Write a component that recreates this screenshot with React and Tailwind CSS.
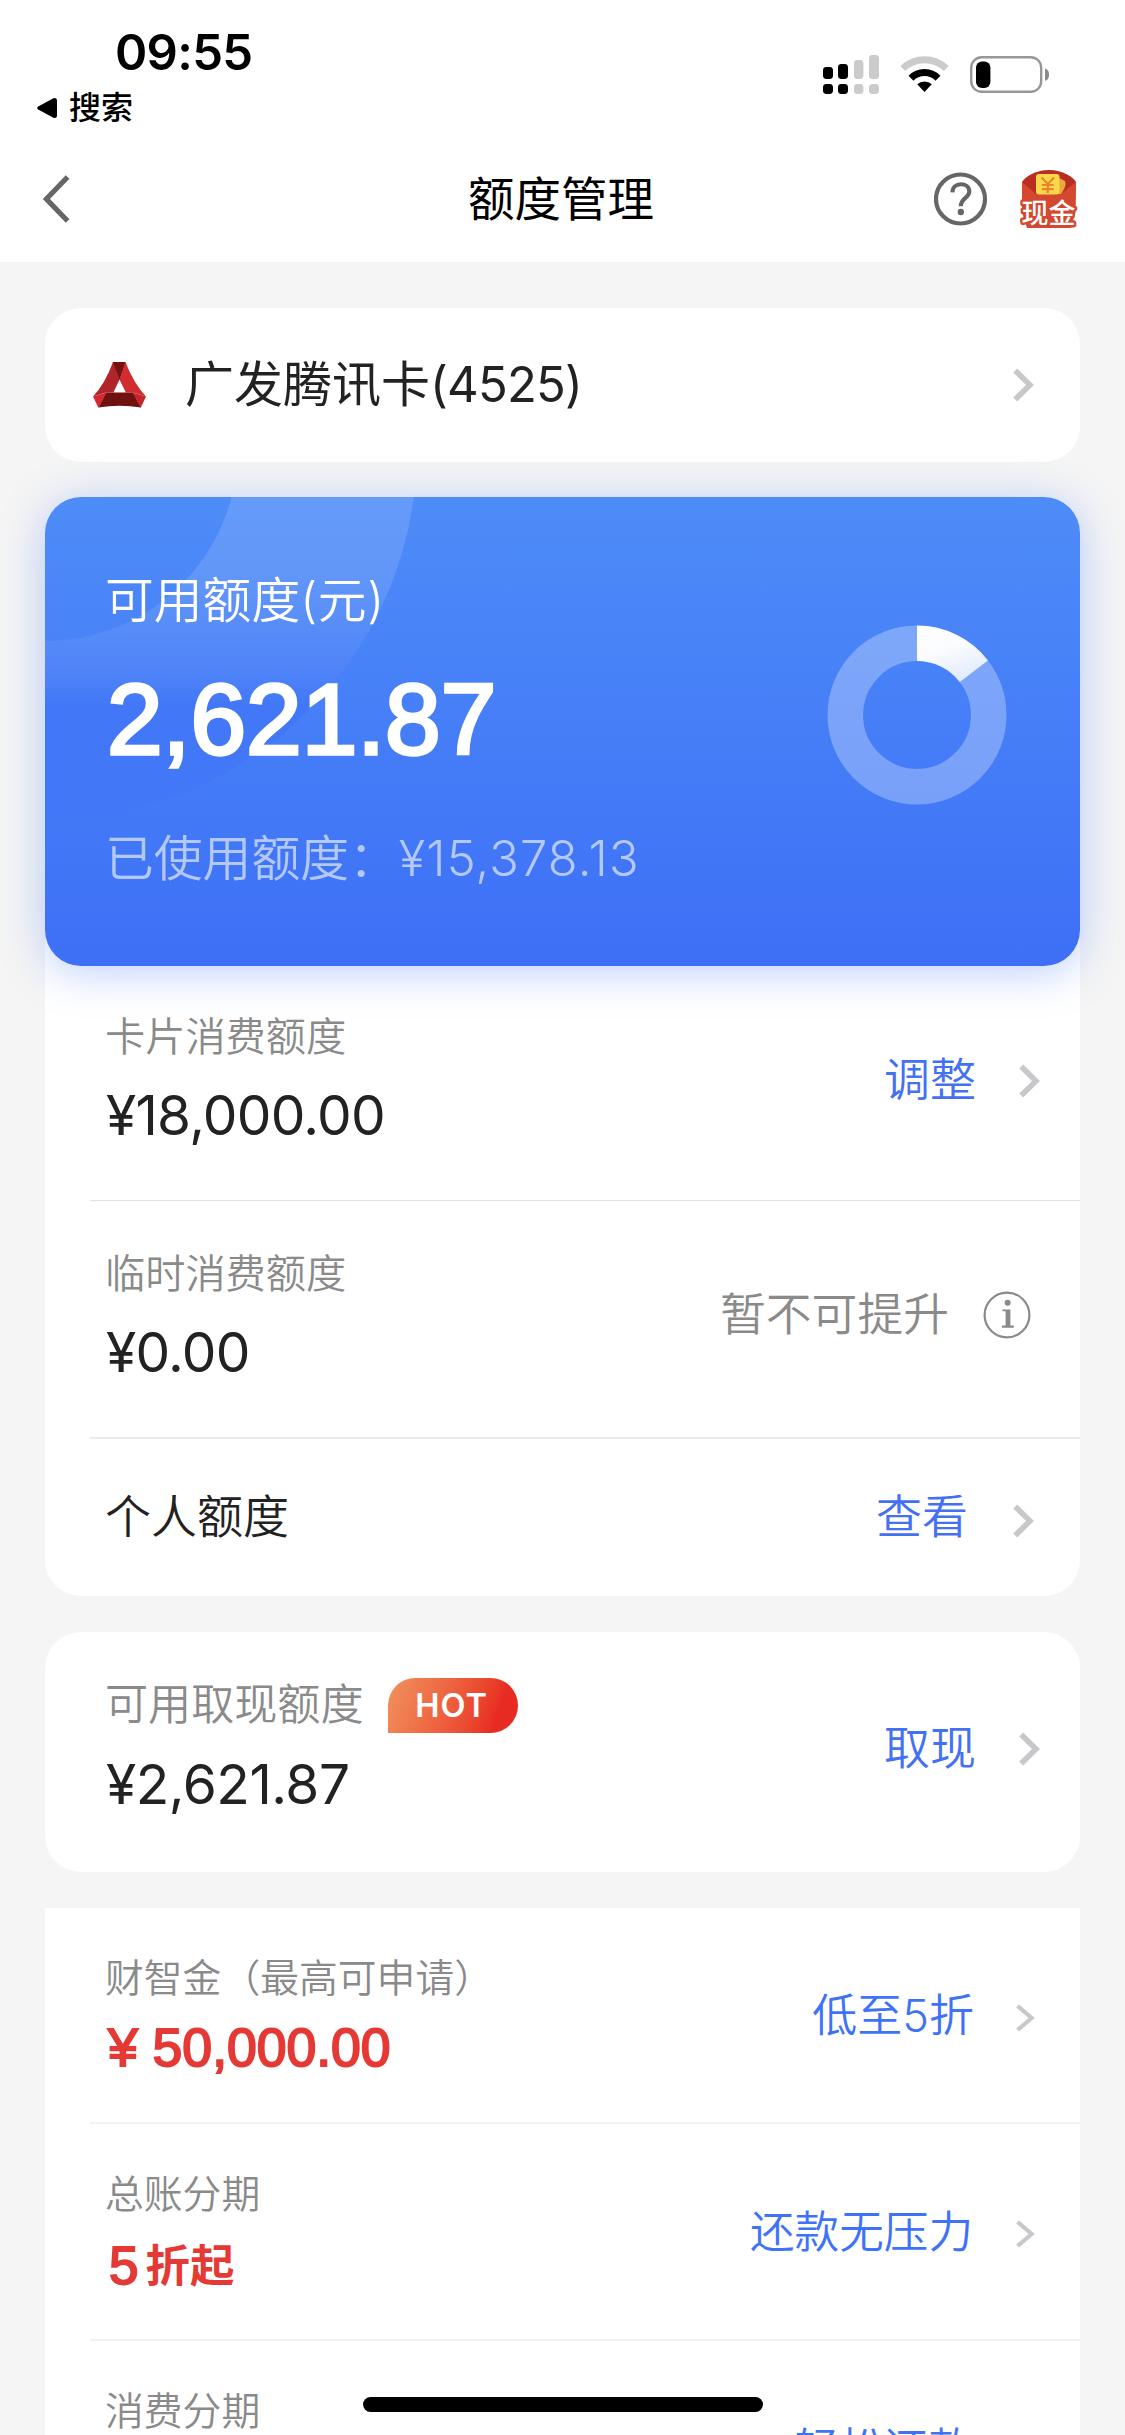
import React from "react";

function Chevron({ small = false, className = "" }) {
  return small ? (
    <svg className={"h-[28px] w-[19px] shrink-0 " + className} viewBox="0 0 19 28" fill="none">
      <path d="M1.6 2 L15.6 14 L1.6 26" stroke="#c7c7cc" strokeWidth="4.2" />
    </svg>
  ) : (
    <svg className={"h-[34px] w-[21px] shrink-0 " + className} viewBox="0 0 21 34" fill="none">
      <path d="M2.2 2.6 L17 17 L2.2 31.4" stroke="#c7c7cc" strokeWidth="5.6" />
    </svg>
  );
}

function StatusIcons() {
  return (
    <svg className="h-[44px] w-[226px]" viewBox="823 52 226 44" fill="none">
      <g fill="#000">
        <rect x="823" y="67" width="10" height="12" rx="3.4" />
        <rect x="838" y="64" width="10" height="15" rx="3.4" />
        <rect x="823" y="84" width="10" height="10" rx="3.4" />
        <rect x="838" y="84" width="10" height="10" rx="3.4" />
      </g>
      <g fill="#cbcbcb">
        <rect x="854" y="60" width="9.4" height="19" rx="3.4" />
        <rect x="869" y="55" width="10" height="24" rx="3.4" />
        <rect x="854" y="84" width="9.4" height="10" rx="3.4" />
        <rect x="869" y="84" width="10" height="10" rx="3.4" />
      </g>
      <path d="M902.8 68.6 A31.3 31.3 0 0 1 946.2 68.6" stroke="#cbcbcb" strokeWidth="7" />
      <path d="M911 78.2 A19 19 0 0 1 938 78.2" stroke="#000" strokeWidth="7" />
      <path d="M917.2 84.2 A11 11 0 0 1 931.8 84.2 L924.5 92 Z" fill="#000" />
      <rect x="971.2" y="57.2" width="70" height="34.6" rx="10.5" stroke="#979797" strokeWidth="2.4" />
      <rect x="976" y="61.5" width="14.4" height="26.5" rx="6" fill="#000" />
      <path d="M1045 68.6 C1048.2 69.6 1049 72 1049 74.7 C1049 77.4 1048.2 79.8 1045 80.8 Z" fill="#8a8a8a" />
    </svg>
  );
}

function HelpIcon() {
  return (
    <svg className="h-[54px] w-[54px]" viewBox="0 0 54 54" fill="none">
      <circle cx="26.5" cy="27" r="24.5" stroke="#666" strokeWidth="4.2" />
      <path d="M18.4 20.4 C18.6 14.8 22.4 12.2 26.8 12.2 C31.6 12.2 35.3 15 35.3 19.5 C35.3 25.8 26.8 26.2 26.8 34.2" stroke="#666" strokeWidth="4.1" />
      <circle cx="26.8" cy="40" r="3.2" fill="#666" />
    </svg>
  );
}

function RedPacket() {
  return (
    <svg className="h-[60px] w-[58px] font-['Noto_Sans_CJK_SC',sans-serif]" viewBox="1019 169 58 60">
      <path d="M1021 182 C1024 177 1034 170 1048 170 C1062 170 1072 177 1075 182 L1074 212 L1022 212 Z" fill="#b92e22" />
      <path d="M1021 182 L1035 194 H1060 L1075 182 L1074.5 212 L1070 228 H1026 L1021 212 Z" fill="#d4482f" />
      <path d="M1056 177 L1064 181 Q1066 186 1060 194 H1054 Z" fill="#e9a83a" />
      <rect x="1035" y="174" width="23.5" height="20.5" rx="3" fill="#f8d84a" />
      <path d="M1040.5 177.5 L1046.8 184 L1053 177.5 M1046.8 184 V193 M1041 185 H1052.6 M1041 189.2 H1052.6" stroke="#e8862e" strokeWidth="2.2" fill="none" />
      <text x="1020.4" y="222.5" fontSize="27" fontWeight="500" fill="#fff" stroke="#d4482f" strokeWidth="5" strokeLinejoin="round" paintOrder="stroke">现金</text>
    </svg>
  );
}

function BankLogo() {
  return (
    <svg className="h-[46px] w-[53px] shrink-0" viewBox="0 0 53 46">
      <path d="M20 0 L26.5 17.5 L20.4 30.4 L13 30.6 L0 34.4 Q12 22 20 0 Z" fill="#b1242a" />
      <path d="M32.4 0 Q41 22 53 34.4 L40 30.6 L32.8 30.4 L26.5 17.5 Z" fill="#d22b30" />
      <path d="M19.6 0 H32.6 L26.5 18 Z" fill="#78100f" />
      <path d="M13 30.4 H40 L48 45.6 Q26.5 42 5.5 45.6 Z" fill="#701110" />
      <path d="M0 34.4 L13.4 30.4 L5.5 46 Z" fill="#d6292f" />
      <path d="M53 34.4 L39.6 30.4 L47.6 46 Z" fill="#c3262c" />
    </svg>
  );
}

function InfoIcon() {
  return (
    <svg className="h-[48px] w-[48px] shrink-0" viewBox="0 0 48 48" fill="none">
      <circle cx="24" cy="24" r="22.4" stroke="#8a8a8a" strokeWidth="2.2" />
      <circle cx="24.6" cy="11.8" r="3" fill="#8a8a8a" />
      <path d="M19.4 18.4 H27.4 V34.6 H30.8 V36.8 H19 V34.6 H22.6 V20.2 H19.4 Z" fill="#8a8a8a" />
    </svg>
  );
}

function Donut() {
  return (
    <svg className="h-[180px] w-[180px] shrink-0" viewBox="-90 -90 180 180" fill="none">
      <defs>
        <linearGradient id="slice" gradientUnits="userSpaceOnUse" x1="10" y1="-90" x2="30" y2="-30">
          <stop offset="0" stopColor="#fff" />
          <stop offset="0.45" stopColor="#fafcff" />
          <stop offset="1" stopColor="#e2ebfd" />
        </linearGradient>
      </defs>
      <circle r="71.7" stroke="#fff" strokeOpacity="0.29" strokeWidth="35.6" />
      <path d="M0 -89.5 A89.5 89.5 0 0 1 70.9 -54.6 L42.8 -33 A54 54 0 0 0 0 -54 Z" fill="url(#slice)" />
    </svg>
  );
}

function CardRings() {
  return (
    <svg className="absolute inset-0 h-full w-full" viewBox="0 0 1035 469" fill="none">
      <defs>
        <linearGradient id="band" gradientUnits="userSpaceOnUse" x1="0" y1="0" x2="0" y2="324">
          <stop offset="0" stopColor="#fff" stopOpacity="0.13" />
          <stop offset="0.2" stopColor="#fff" stopOpacity="0.13" />
          <stop offset="0.45" stopColor="#80a0ff" stopOpacity="0.19" />
          <stop offset="0.64" stopColor="#3c6cf6" stopOpacity="0.45" />
          <stop offset="1" stopColor="#3c6cf6" stopOpacity="0.1" />
        </linearGradient>
      </defs>
      <circle cx="0" cy="-49" r="282.5" stroke="url(#band)" strokeWidth="179" />
    </svg>
  );
}

export default function App() {
  return (
    <div className="relative h-[2435px] w-[1125px] overflow-hidden bg-[#f5f5f5] font-['Inter','Noto_Sans_CJK_SC',sans-serif] font-[350] text-[#222]">
      <header className="h-[262px] bg-white text-black">
        <div className="flex h-[136px] justify-between pr-[76px]">
          <div className="pt-[23px]">
            <div className="pl-[115px] text-[49px] leading-[60px] font-semibold tracking-[-0.7px]">09:55</div>
            <div className="flex items-center gap-[12px] pl-[37px] text-[32px] leading-[50px] font-medium">
              <svg className="h-[22px] w-[20px]" viewBox="0 0 20 22">
                <path d="M1.2 9.4 L16.4 1.2 Q20 0 20 3.4 V18.6 Q20 22 16.4 20.8 L1.2 12.6 Q-0.8 11 1.2 9.4 Z" />
              </svg>
              <span>搜索</span>
            </div>
          </div>
          <div className="pt-[52px]">
            <StatusIcons />
          </div>
        </div>
        <nav className="grid h-[126px] grid-cols-3 items-center pr-[47px] pl-[44px]">
          <svg className="-ml-[2px] h-[50px] w-[28px]" viewBox="0 0 28 50" fill="none">
            <path d="M25.6 3 L4.4 25 L25.6 47" stroke="#666" strokeWidth="5.2" />
          </svg>
          <h1 className="text-center text-[46.5px] leading-[60px] font-normal">额度管理</h1>
          <div className="flex items-center justify-end gap-[32px]">
            <HelpIcon />
            <RedPacket />
          </div>
        </nav>
      </header>

      <main className="px-[45px] pt-[46px]">
        <section className="flex h-[154px] items-center rounded-[36px] bg-white pr-[46px] pl-[48px]">
          <BankLogo />
          <span className="ml-[39px] text-[49px] leading-[70px] font-normal">
            广发腾讯卡<span className="font-[370] tracking-[-0.8px]">(4525)</span>
          </span>
          <Chevron className="ml-auto" />
        </section>

        <section className="relative z-10 mt-[35px] flex h-[469px] justify-between rounded-[36px] bg-linear-to-b from-[#4e8cf8] to-[#3e6ff6] pr-[73px] pl-[60px] text-white shadow-[0_6px_44px_rgba(62,112,246,0.34)]">
          <div className="absolute inset-0 overflow-hidden rounded-[36px]">
            <CardRings />
          </div>
          <div className="relative pt-[69px]">
            <div className="text-[48.8px] leading-[70px]">
              可用额度<span className="tracking-[0.6px]">(元)</span>
            </div>
            <div className="mt-[31px] pl-[2px] font-['Liberation_Sans',sans-serif] text-[100px] leading-[104px] font-normal [-webkit-text-stroke:3.4px_#fff]">
              2,621.87
            </div>
            <div className="mt-[53px] text-[48.8px] leading-[70px] text-white/60">
              已使用额度：<span className="ml-[1px] tracking-[1.2px]">¥15,378.13</span>
            </div>
          </div>
          <div className="relative pt-[128px]">
            <Donut />
          </div>
        </section>

        <section className="-mt-[36px] rounded-b-[36px] bg-white pt-[36px] pl-[45px]">
          <div className="flex h-[235px] justify-between border-b border-[#e2e2e2] pr-[40px] pl-[16px]">
            <div className="pt-[31px] leading-[79px]">
              <div className="-ml-px text-[40.2px] text-[#8a8a8a]">卡片消费额度</div>
              <div className="text-[55px] font-normal tracking-[-0.75px]">¥18,000.00</div>
            </div>
            <div className="mt-[74px] flex h-[78px] items-center gap-[43px] text-[46px] text-[#4470f4]">
              <span>调整</span>
              <Chevron className="mt-[4px]" />
            </div>
          </div>
          <div className="flex h-[238px] justify-between border-b-2 border-[#ebebeb] pr-[49px] pl-[16px]">
            <div className="pt-[33px] leading-[79px]">
              <div className="-ml-px text-[40.2px] text-[#8a8a8a]">临时消费额度</div>
              <div className="text-[55px] font-normal tracking-[-0.75px]">¥0.00</div>
            </div>
            <div className="mt-[75px] flex h-[78px] items-center gap-[34px] text-[45.8px] text-[#8a8a8a]">
              <span>暂不可提升</span>
              <InfoIcon />
            </div>
          </div>
          <div className="flex h-[157px] justify-between pr-[46px] pl-[16px]">
            <div className="-ml-px pt-[38px] text-[46px] leading-[78px]">个人额度</div>
            <div className="mt-[38px] flex h-[78px] items-center gap-[45px] text-[46px] text-[#4470f4]">
              <span>查看</span>
              <Chevron className="mt-[9px]" />
            </div>
          </div>
        </section>

        <section className="mt-[36px] flex h-[240px] justify-between rounded-[36px] bg-white pr-[40px] pl-[61px]">
          <div className="pt-[32px] leading-[80px]">
            <div className="-ml-px flex items-center text-[43.1px] text-[#8a8a8a]">
              <span>可用取现额度</span>
              <span className="mt-[2px] ml-[24px] flex h-[55px] w-[130px] items-center justify-center rounded-[28px] rounded-bl-none bg-linear-110 from-[#f08c5a] from-5% to-[#e82b22] to-82% pt-[2px] pr-[2px] text-[32.5px] leading-none font-semibold tracking-[1px] text-white">
                HOT
              </span>
            </div>
            <div className="text-[55px] font-normal tracking-[-0.5px]">¥2,621.87</div>
          </div>
          <div className="mt-[76px] flex h-[78px] items-center gap-[43px] text-[46px] text-[#4470f4]">
            <span>取现</span>
            <Chevron className="mt-[4px]" />
          </div>
        </section>

        <section className="mt-[36px] bg-white pl-[45px]">
          <div className="flex h-[216px] justify-between border-b-2 border-[#f2f2f2] pr-[45px] pl-[16px]">
            <div className="pt-[35px] leading-[70px]">
              <div className="-ml-px text-[38.8px] text-[#8a8a8a]">财智金（最高可申请）</div>
              <div className="pl-[2px] font-['Liberation_Sans',sans-serif] text-[53.5px] font-normal text-[#e53935] [-webkit-text-stroke:2px_#e53935]">
                ¥ 50,000.00
              </div>
            </div>
            <div className="mt-[69px] flex h-[78px] items-center gap-[42px] text-[45px] text-[#3f73f7]">
              <span>低至5折</span>
              <Chevron small className="mt-[3px]" />
            </div>
          </div>
          <div className="flex h-[217px] justify-between border-b-2 border-[#f2f2f2] pr-[45px] pl-[16px]">
            <div className="pt-[35px] leading-[70px]">
              <div className="-ml-px text-[38.8px] text-[#8a8a8a]">总账分期</div>
              <div className="flex gap-[7px] pt-[2px] text-[#e53935]">
                <span className="pl-[3px] font-['Liberation_Sans',sans-serif] text-[53px] font-normal [-webkit-text-stroke:2px_#e53935]">5</span>
                <span className="text-[44.5px] font-bold">折起</span>
              </div>
            </div>
            <div className="mt-[69px] flex h-[78px] items-center gap-[43px] text-[44.6px] text-[#3f73f7]">
              <span>还款无压力</span>
              <Chevron small className="mt-[3px]" />
            </div>
          </div>
          <div className="flex h-[217px] justify-between pr-[45px] pl-[16px]">
            <div className="pt-[35px] leading-[70px]">
              <div className="-ml-px text-[38.8px] text-[#8a8a8a]">消费分期</div>
            </div>
            <div className="mt-[69px] flex h-[78px] items-center gap-[43px] text-[44.6px] text-[#3f73f7]">
              <span>轻松还款</span>
              <Chevron small className="mt-[3px]" />
            </div>
          </div>
        </section>
      </main>

      <div className="absolute bottom-[23px] left-[363px] z-20 h-[15px] w-[400px] rounded-full bg-black" />
    </div>
  );
}
